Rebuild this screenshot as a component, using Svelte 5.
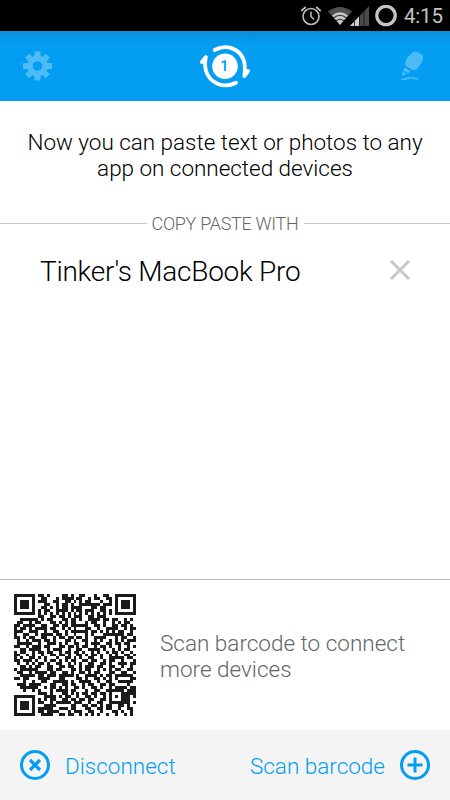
<script lang="ts">
	interface Device {
		id: number;
		name: string;
	}

	let devices = $state<Device[]>([{ id: 1, name: "Tinker's MacBook Pro" }]);

	// 41 x 41 modules, one string per row
	const code = [
		'#######.##.#....##.#..##...#..##..#######',
		'#.....#..##...#.####.##..#.##..##.#.....#',
		'#.###.#.###..##..##.#.#.##...#..#.#.###.#',
		'#.###.#...##..#.##.#..#######.###.#.###.#',
		'#.###.#..##.#.#.##.####...##.##...#.###.#',
		'#.....#.#.##..####.#.##.###..##.#.#.....#',
		'#######.#.#.#.#.#.#.#.#.#.#.#.#.#.#######',
		'........##..##.##.#.###..##.###..........',
		'..######.#.##...##.##.#..####.##.##..#.#.',
		'.##..#.##...##.#.#.##...#.##..#..#.#.##..',
		'##.####..##..##.##.######..##.#..##.##.#.',
		'#.##.#.####.##..#.#.#...##..#..####..#.##',
		'###..###..#..##..#.######.##.#.#.#.##..#.',
		'#..##..#.####.##.#..#...#.#...#######.##.',
		'##.#.##..##..#.##.##.##.#..####...#.##..#',
		'.#..#.###.##.#...##.#..##..#.#..#.#.#.###',
		'.#####..#..###.#.#..##..#.###..##.##.##..',
		'##..#.###.##...##.##.#.##..#.##.#..#..#.#',
		'..##.####..#.###..#..##..####.#..#.#.##..',
		'#.##..#.##.##..#.##.##.#..#.#..#.##.#..#.',
		'##..#.#..#..##.##.#..##.#.##.#..#.#..##.#',
		'#.#..##.#.#...#..##.#.#..##..#..#####.##.',
		'##.###.#..#.##.#.#.##..##.##..#.##..#...#',
		'.#..#.#.##.#..##..#.#.#..##..##.#..###.##',
		'..##.#.##..##..##.##..#.###.##..##..#..#.',
		'#.######...##.##...##.#.##..#.#.#.##..##.',
		'.##..#.####.##..##.#..##.#.##...##..##..#',
		'..#####.##.###.#####.#..####.#.##.######.',
		'##.##...####...##....##.#..##.#.#.#....##',
		'...#..#..##..#####.#..####..#..##..#####.',
		'.###.####...##..##.##..#.##..##.##....#..',
		'..######..#.##.#.#..##.#..##.#..#.####.##',
		'...#..#.#...#.####.##...#..##..######.###',
		'........###.#...##.#.#.##.##.##.#...#####',
		'#######...####.#.##..#..##.#..#.#.#.###.#',
		'#.....#.#.#.##..##.##.##.##..##.#...###..',
		'#.###.#.##..#.#####.###..#..##..#######.#',
		'#.###.#...####.....##..##.##.#.##..##.#..',
		'#.###.#.#####..###.##...##..##.##..#..##.',
		'#.....#.##.####...#.###..##..#...##.#..#.',
		'#######..####..##.##..#.#.#.#..#..#..#.#.'
	];

	const modules = code
		.map((row, y) => [...row].map((c, x) => (c === '#' ? `M${x} ${y}h1v1h-1z` : '')).join(''))
		.join('');

	function remove(id: number) {
		devices = devices.filter((d) => d.id !== id);
	}
</script>

<div class="screen">
	<div class="status">
		<svg class="alarm" viewBox="0 0 22 22" width="22" height="22" fill="none" stroke="#bdbdbd">
			<circle cx="12" cy="11.5" r="8" stroke-width="1.6" />
			<path d="M12 6.5v5l3 3" stroke-width="1.5" />
			<path d="M2.2 6l4.6-4M21.8 6l-4.6-4" stroke-width="1.8" />
		</svg>
		<svg class="wifi" viewBox="0 0 24 20" width="24" height="20">
			<path d="M0 5.5Q12-3.5 24 5.5L12 19z" fill="#505050" />
			<path d="M4 9.4Q12 3 20 9.4L12 19z" fill="#c8c8c8" />
			<path d="M5.5 12Q12 6.5 18.5 12M8 15Q12 11.5 16 15" fill="none" stroke="#333" stroke-width="1.1" />
		</svg>
		<svg class="signal" viewBox="0 0 19 20" width="19" height="20">
			<path d="M0 20L19 0v20z" fill="#4b4b4b" />
			<path d="M0 20l9-9.5V20z" fill="#d0d0d0" />
			<path d="M4.5 12v8M9.5 8v12M14 4v16" stroke="#111" stroke-width=".8" />
		</svg>
		<svg class="battery" viewBox="0 0 22 22" width="22" height="22">
			<circle cx="11" cy="10.5" r="9.2" fill="none" stroke="#c4c4c4" stroke-width="3.2" />
		</svg>
		<span class="clock">4:15</span>
	</div>

	<header>
		<button type="button" aria-label="Settings">
			<svg viewBox="-15.5 -15 30 30" width="30" height="30" fill="#4dbcf6">
				<path
					fill-rule="evenodd"
					d="M-10.4 0a10.4 10.4 0 1 0 20.8 0a10.4 10.4 0 1 0-20.8 0M-4.8 0a4.8 4.8 0 1 1 9.6 0a4.8 4.8 0 1 1-9.6 0"
				/>
				{#each [0, 45, 90, 135, 180, 225, 270, 315] as angle}
					<path d="M-3-9v-5.5h6V-9z" transform="rotate({angle})" />
				{/each}
			</svg>
		</button>
		<svg class="logo" viewBox="0 0 52 48" width="52" height="48">
			<g fill="none" stroke="#fff" stroke-width="3.8" stroke-linecap="round" stroke-linejoin="round">
				<path d="M15.7 8C27 1.5 41 6.5 45 19q1.5 6 .3 15l3.7-5" />
				<path d="M37 40.8C25 47 11 41.5 7 29q-1.7-6-.1-14l-4 5" />
			</g>
			<circle cx="26" cy="24.2" r="12.8" fill="#fff" />
			<text x="25.5" y="29.4" text-anchor="middle">1</text>
		</svg>
		<button type="button" aria-label="Clear">
			<svg viewBox="0 0 28 32" width="28" height="32" fill="#4dbcf6">
				<path
					d="M14.5 2.5q3-1.6 6 0l2.5 1.5q3 2 2 5l-1.2 3.5-4.6 6q-2 2.5-5 1.2l-4.5-2.6q-3.4-2-2-5.3l1.4-4.2z"
				/>
				<path d="M7 17.4l5.5 3.6-2 2.6-5.6-3.3zM4.5 21.3l4.3 2.5-4.9 2z" />
				<path
					d="M3.5 29c3.5 1.5 6-1.3 9-1.3s3.5 1.5 7.5 1.3"
					fill="none"
					stroke="#4dbcf6"
					stroke-width="1.5"
				/>
			</svg>
		</button>
	</header>

	<p class="intro">Now you can paste text or photos to any<br />app on connected devices</p>

	<h2><span>Copy paste with</span></h2>

	<ul>
		{#each devices as device (device.id)}
			<li>
				<span>{device.name}</span>
				<button type="button" aria-label="Remove" onclick={() => remove(device.id)}>
					<svg viewBox="0 0 22 22" width="22" height="22">
						<path d="M2 2l18 18M20 2L2 20" stroke="#c8c8c8" stroke-width="3" />
					</svg>
				</button>
			</li>
		{/each}
	</ul>

	<section>
		<svg class="qr" viewBox="0 0 41 41" width="122" height="122" shape-rendering="crispEdges">
			<path d={modules} fill="#1b1b1b" />
		</svg>
		<p>Scan barcode to connect<br />more devices</p>
	</section>

	<footer>
		<button type="button">
			<svg viewBox="0 0 30 30" width="30" height="30" fill="none" stroke="#039ef2">
				<circle cx="15" cy="15" r="13.5" stroke-width="3" />
				<path d="M10 10l10 10M20 10L10 20" stroke-width="3.2" />
			</svg>
			<span>Disconnect</span>
		</button>
		<button type="button">
			<span>Scan barcode</span>
			<svg viewBox="0 0 30 30" width="30" height="30" fill="none" stroke="#039ef2">
				<circle cx="15" cy="15" r="13.5" stroke-width="3" />
				<path d="M15 7.5v15M7.5 15h15" stroke-width="3" />
			</svg>
		</button>
	</footer>
</div>

<style>
	:global(body) {
		margin: 0;
	}

	.screen {
		display: flex;
		flex-direction: column;
		width: 450px;
		height: 800px;
		background: #fff;
		font-family: Roboto, sans-serif;
		font-weight: 300;
		overflow: hidden;
	}

	button {
		display: flex;
		align-items: center;
		padding: 0;
		border: 0;
		background: none;
		font: inherit;
		color: inherit;
		cursor: pointer;
	}

	svg {
		display: block;
		flex: none;
	}

	.status {
		display: flex;
		align-items: center;
		justify-content: flex-end;
		height: 31px;
		box-sizing: border-box;
		padding-right: 7px;
		background: #000;
	}

	.wifi {
		margin-left: 7px;
	}

	.signal {
		margin-left: -2px;
	}

	.battery {
		margin-left: 6px;
	}

	.clock {
		width: 39px;
		margin-left: 7px;
		color: #c4c4c4;
		font-size: 20.5px;
		font-weight: 400;
		letter-spacing: -0.2px;
		white-space: nowrap;
	}

	header {
		display: flex;
		align-items: center;
		justify-content: space-between;
		height: 70px;
		box-sizing: border-box;
		padding: 0 24px 0 22px;
		background: linear-gradient(#0b8fd9, #039ef2 14px);
	}

	.logo text {
		fill: #039ef2;
		font-size: 14.5px;
		font-weight: 600;
	}

	.intro {
		margin: 28px 0 0;
		font-size: 22.5px;
		letter-spacing: -0.03px;
		line-height: 26px;
		text-align: center;
		white-space: nowrap;
	}

	h2 {
		display: flex;
		align-items: center;
		gap: 5px;
		height: 22px;
		margin: 31px 0 0;
		color: #666;
		font-size: 18px;
		font-weight: 300;
		letter-spacing: -0.3px;
		line-height: 22px;
		text-transform: uppercase;
		white-space: nowrap;
	}

	h2 span {
		padding-top: 2px;
	}

	h2::before,
	h2::after {
		content: '';
		flex: 1;
		height: 1px;
		background: #c8c8c8;
	}

	ul {
		flex: 1;
		margin: 0;
		padding: 18px 39px 0 40px;
		list-style: none;
	}

	li {
		display: flex;
		align-items: center;
		justify-content: space-between;
		height: 36px;
		font-size: 28px;
		letter-spacing: -0.26px;
	}

	li span {
		padding-top: 2px;
	}

	section {
		display: flex;
		align-items: center;
		gap: 24px;
		height: 151px;
		box-sizing: border-box;
		padding-left: 14px;
		border-top: 1px solid #b8b8b8;
	}

	section p {
		margin: 1px 0 0;
		color: #666;
		font-size: 22.5px;
		line-height: 26px;
		white-space: nowrap;
	}

	footer {
		display: flex;
		align-items: center;
		justify-content: space-between;
		height: 70px;
		padding: 0 20px;
		background: #f4f4f4;
		color: #039ef2;
		font-size: 22.5px;
		font-weight: 350;
		letter-spacing: 0.06px;
	}

	footer button {
		gap: 15px;
	}

	footer span {
		padding-top: 1px;
	}
</style>
